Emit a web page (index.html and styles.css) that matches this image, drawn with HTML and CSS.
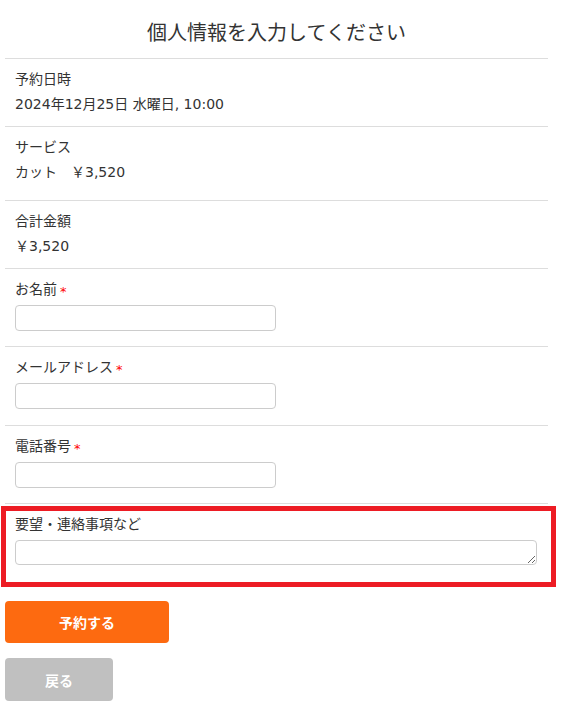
FILE: index.html
```html
<!DOCTYPE html>
<html lang="ja">
<head>
<meta charset="utf-8">
<title>個人情報を入力してください</title>
<link rel="stylesheet" href="styles.css">
</head>
<body>
<div class="page">
  <h1 class="title">個人情報を入力してください</h1>

  <div class="section">
    <div class="label">予約日時</div>
    <div class="value">2024年12月25日 水曜日, 10:00</div>
  </div>

  <div class="section section-tall">
    <div class="label">サービス</div>
    <div class="value">カット　￥3,520</div>
  </div>

  <div class="section">
    <div class="label">合計金額</div>
    <div class="value">￥3,520</div>
  </div>

  <div class="section section-field">
    <div class="label">お名前<span class="req">*</span></div>
    <input class="input" type="text">
  </div>

  <div class="section section-field section-field-wide">
    <div class="label">メールアドレス<span class="req">*</span></div>
    <input class="input" type="email">
  </div>

  <div class="section section-field">
    <div class="label">電話番号<span class="req">*</span></div>
    <input class="input" type="tel">
  </div>

  <div class="section section-field section-note">
    <div class="label">要望・連絡事項など</div>
    <textarea class="textarea"></textarea>
    <div class="highlight"></div>
  </div>

  <div class="actions">
    <button class="btn btn-primary" type="button">予約する</button>
    <button class="btn btn-secondary" type="button">戻る</button>
  </div>
</div>
</body>
</html>
```

FILE: styles.css
```css
html, body {
  margin: 0;
  padding: 0;
  background: #ffffff;
}

body {
  font-family: "DejaVu Sans", "Noto Sans CJK JP", sans-serif;
  font-size: 14px;
  color: #333333;
}

.page {
  margin-left: 5px;
  width: 543px;
}

.title {
  margin: 17px 0 12px;
  font-family: "Noto Sans CJK JP", sans-serif;
  font-size: 20px;
  line-height: 29px;
  font-weight: normal;
  text-align: center;
  color: #333333;
}

.section {
  border-top: 1px solid #dddddd;
  padding: 10px 10px 12px;
}

.section-tall {
  padding-bottom: 18px;
}

.section-field {
  padding-bottom: 15px;
}

.section-field-wide {
  padding-bottom: 16px;
}

.section-note {
  position: relative;
}

.label {
  line-height: 20px;
  height: 20px;
}

.value {
  margin-top: 5px;
  line-height: 20px;
  height: 20px;
}

.req {
  color: #ff0000;
  margin-left: 3px;
  font-size: 13px;
  position: relative;
  top: 2px;
}

.input {
  display: block;
  box-sizing: border-box;
  margin: 6px 0 0;
  width: 261px;
  height: 26px;
  border: 1px solid #cccccc;
  border-radius: 4px;
  background: #ffffff;
  padding: 0 6px;
  font: inherit;
  outline: none;
}

.textarea {
  display: block;
  box-sizing: border-box;
  margin: 6px 0 0;
  width: 522px;
  height: 25px;
  border: 1px solid #cccccc;
  border-radius: 4px;
  background: #ffffff;
  padding: 2px 6px;
  font: inherit;
  resize: vertical;
  outline: none;
}

.highlight {
  position: absolute;
  left: -4px;
  top: 2px;
  width: 555px;
  height: 81px;
  box-sizing: border-box;
  border: 5px solid #ed1c24;
  pointer-events: none;
}

.actions {
  margin-top: 21px;
  display: flex;
  flex-direction: column;
  align-items: flex-start;
  gap: 15px;
}

.btn {
  border: none;
  border-radius: 4px;
  color: #ffffff;
  font-family: "Noto Sans CJK JP", sans-serif;
  font-size: 14px;
  font-weight: bold;
  padding: 0;
  cursor: pointer;
}

.btn-primary {
  width: 164px;
  height: 42px;
  background: #fd6a10;
}

.btn-secondary {
  width: 108px;
  height: 43px;
  background: #c0c0c0;
}
```
